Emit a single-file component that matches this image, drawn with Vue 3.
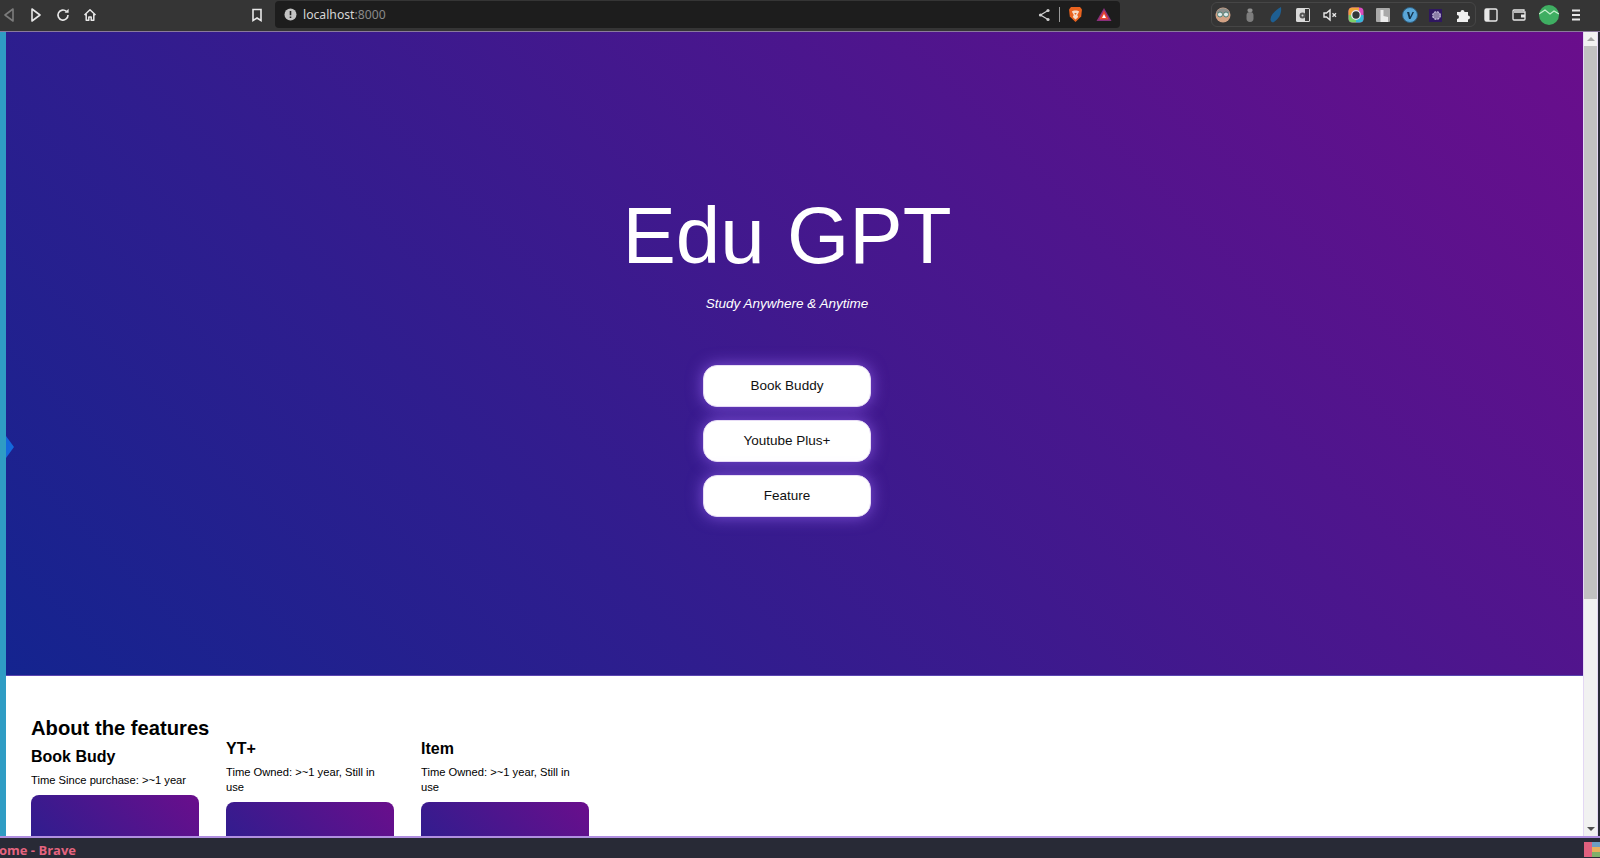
<script setup>
const features = [
  { title: 'Book Budy', text: 'Time Since purchase: >~1 year', about: true },
  { title: 'YT+', text: 'Time Owned: >~1 year, Still in use' },
  { title: 'Item', text: 'Time Owned: >~1 year, Still in use' },
];
const buttons = ['Book Buddy', 'Youtube Plus+', 'Feature'];
</script>

<template>
  <div class="window">
    <header class="toolbar">
      <div class="nav">
        <svg width="14" height="16" viewBox="0 0 14 16"><path d="M11 2 3 8l8 6z" fill="none" stroke="#7c7c7c" stroke-width="1.6" stroke-linejoin="round"/></svg>
        <svg width="14" height="16" viewBox="0 0 14 16"><path d="M3 2l8 6-8 6z" fill="none" stroke="#e8e8e8" stroke-width="1.6" stroke-linejoin="round"/></svg>
        <svg width="14" height="16" viewBox="0 0 14 16"><path d="M12 8a5 5 0 1 1-1.6-3.6" fill="none" stroke="#e8e8e8" stroke-width="1.6"/><path d="M12.6 1.8v4h-4z" fill="#e8e8e8"/></svg>
        <svg width="14" height="16" viewBox="0 0 14 16"><path d="M1.5 8 7 2.8 12.5 8M3.2 7v6.2h2.6V10h2.4v3.2h2.6V7" fill="none" stroke="#e8e8e8" stroke-width="1.5" stroke-linejoin="round"/></svg>
      </div>
      <svg class="bookmark" width="12" height="14" viewBox="0 0 12 14"><path d="M2 1.5h8v11L6 10l-4 2.5z" fill="none" stroke="#e8e8e8" stroke-width="1.6"/></svg>
      <div class="urlbar">
        <svg width="13" height="13" viewBox="0 0 13 13"><circle cx="6.5" cy="6.5" r="6" fill="#c4c4c4"/><path d="M6.5 3v4.2M6.5 8.6v1.4" stroke="#222" stroke-width="1.6"/></svg>
        <span class="url">localhost<span class="port">:8000</span></span>
        <svg class="share" width="12" height="14" viewBox="0 0 12 14"><path d="M10 2.5 2.5 7l7.5 4.5" fill="none" stroke="#d0d0d0" stroke-width="1.2"/><circle cx="10" cy="2.5" r="1.6" fill="#d0d0d0"/><circle cx="2.5" cy="7" r="1.6" fill="#d0d0d0"/><circle cx="10" cy="11.5" r="1.6" fill="#d0d0d0"/></svg>
        <span class="divider"></span>
        <svg width="15" height="17" viewBox="0 0 15 17"><path d="M3 1h9l2 2.500-.8 7L7.500 16 1.800 10.500 1 3.500z" fill="#e9631f"/><path d="M3.800 5.500 6 4.500h3l2.200 1-2 3.500 1 2-2.700 2.500L4.800 11l1-2z" fill="#f6dcc8"/><path d="M6.300 7h2.400l-1.200 2z" fill="#e9631f"/></svg>
        <svg width="16" height="15" viewBox="0 0 16 15"><path d="M8 1l7.500 13H.5z" fill="#8a2f7c"/><path d="M8 3.500l4.800 9H3.200z" fill="#e8452f"/><path d="M8 7l2 4H6z" fill="#fff"/></svg>
      </div>
      <div class="extensions">
        <svg width="16" height="16" viewBox="0 0 16 16"><circle cx="8" cy="8" r="7.500" fill="#d2a184"/><path d="M1 6a7.500 7.500 0 0 1 14 0z" fill="#8d8f8c"/><circle cx="5" cy="7.500" r="2.500" fill="#dfeaea" stroke="#4f7f76"/><circle cx="11" cy="7.500" r="2.500" fill="#dfeaea" stroke="#4f7f76"/></svg>
        <svg width="16" height="16" viewBox="0 0 16 16"><rect x="5.500" y="1.500" width="5" height="3.500" rx="1.500" fill="#8f8f8f"/><rect x="4.500" y="5" width="7" height="10" rx="3.400" fill="#7d7d7d"/></svg>
        <svg width="16" height="16" viewBox="0 0 16 16"><path d="M13 0c.8 6-1.500 12-8 15.500C2 15 1.500 11 5 6.500 7.500 3.500 10 1.500 13 0z" fill="#1e5f92"/></svg>
        <svg width="16" height="16" viewBox="0 0 16 16"><rect x="1" y="1" width="14" height="14" rx="1.500" fill="#d9d9d9"/><path d="M10 2h4v12h-4z" fill="#3a3a3a"/><circle cx="7.500" cy="8.500" r="3" fill="#565656"/><circle cx="7.500" cy="8.500" r="1" fill="#d9d9d9"/></svg>
        <svg width="16" height="16" viewBox="0 0 16 16"><path d="M2 6h2.500L8 3v10L4.500 10H2z" fill="none" stroke="#e8e8e8" stroke-width="1.400"/><path d="M10.500 6.200l3.500 3.600M14 6.200l-3.500 3.600" stroke="#e8e8e8" stroke-width="1.300"/></svg>
        <svg width="16" height="16" viewBox="0 0 16 16"><rect x=".5" y=".5" width="15" height="15" rx="4" fill="#d94cc0"/><path d="M.5 8V4.500a4 4 0 0 1 4-4H11v7.500z" fill="#f0a43a"/><path d="M8 8h7.500v3.500a4 4 0 0 1-4 4H8z" fill="#37b8d8"/><path d="M.5 8H8v7.500H4.500a4 4 0 0 1-4-4z" fill="#7bd06a"/><circle cx="8" cy="8" r="4.300" fill="#33363a" stroke="#e8e8f0" stroke-width="1.300"/></svg>
        <svg width="16" height="16" viewBox="0 0 16 16"><rect x="1" y="1" width="14" height="14" rx="1" fill="#a9a9a9"/><path d="M5.500 3h3v6l4.500 1v5H5.500z" fill="#ececec"/></svg>
        <svg width="16" height="16" viewBox="0 0 16 16"><circle cx="8" cy="8" r="7.500" fill="#5aa6d8" stroke="#2f5f80"/><path d="M5 5h2.200l1 4.800L10.500 5H12l-3.500 7H7z" fill="#14334a"/></svg>
        <svg width="16" height="16" viewBox="0 0 16 16"><rect x="1" y="2" width="13" height="13" fill="#2f1760"/><circle cx="8.500" cy="8.500" r="3.800" fill="#8c7fa8" stroke="#c9bfe0" stroke-width="1.200" stroke-dasharray="2 1"/></svg>
        <svg width="16" height="16" viewBox="0 0 16 16"><path d="M2 5h3.500a2 2 0 1 1 4 0H13v3.500a2 2 0 1 1 0 4V15H2v-3a2 2 0 1 0 0-4z" fill="#f0f0f0"/></svg>
      </div>
      <svg class="after-pill" width="16" height="16" viewBox="0 0 16 16"><rect x="2" y="2" width="12" height="12" rx="1.500" fill="none" stroke="#e8e8e8" stroke-width="1.400"/><rect x="2" y="2" width="4.500" height="12" fill="#e8e8e8"/></svg>
      <svg class="wallet" width="16" height="16" viewBox="0 0 16 16"><path d="M13 4V3H3a1 1 0 0 0-1 1v8a1 1 0 0 0 1 1h10a1 1 0 0 0 1-1V5H3" fill="none" stroke="#e8e8e8" stroke-width="1.300"/><rect x="10" y="7.500" width="4" height="3" fill="#e8e8e8"/></svg>
      <svg class="avatar" width="20" height="20" viewBox="0 0 20 20"><circle cx="10" cy="10" r="10" fill="#3fae62"/><path d="M0 9l6-4 5 4 4-3 5 3" fill="none" stroke="#c8f0cf" stroke-width="1.200"/></svg>
      <svg class="menu" width="12" height="14" viewBox="0 0 12 14"><path d="M2 2.500h8M2 7h8M2 11.500h8" stroke="#e8e8e8" stroke-width="1.800"/></svg>
    </header>

    <div class="viewport">
      <div class="strip"></div>
      <span class="strip-arrow"></span>
      <main class="page">
        <section class="hero">
          <h1>Edu GPT</h1>
          <p class="tagline">Study Anywhere &amp; Anytime</p>
          <div class="actions">
            <button v-for="label in buttons" :key="label">{{ label }}</button>
          </div>
        </section>
        <section class="about">
          <div v-for="item in features" :key="item.title" class="col" :class="{ first: item.about }">
            <h2 v-if="item.about">About the features</h2>
            <h3>{{ item.title }}</h3>
            <p>{{ item.text }}</p>
            <div class="thumb"></div>
          </div>
        </section>
      </main>
      <div class="scrollbar">
        <span class="arrow up"></span>
        <span class="thumb-bar"></span>
        <span class="arrow down"></span>
      </div>
    </div>

    <footer class="panel">
      <span class="panel-title">ome - Brave</span>
      <div class="panel-blocks">
        <span class="pink"></span>
        <div class="stack"><i class="b"></i><i class="y"></i><i class="g"></i></div>
      </div>
    </footer>
  </div>
</template>

<style>
html, body {
  margin: 0;
  overflow: hidden;
}
</style>

<style scoped>
.window {
  width: 1600px;
  height: 858px;
  display: flex;
  flex-direction: column;
  overflow: hidden;
  background: #282a36;
  font-family: "Liberation Sans", Arial, sans-serif;
}

.toolbar {
  height: 29px;
  padding-bottom: 2px;
  flex: none;
  display: flex;
  align-items: center;
  background: #353535;
  border-bottom: 1px solid #8a7a9c;
  box-sizing: content-box;
}

.toolbar > svg {
  flex: none;
}

.nav {
  display: flex;
  align-items: center;
  gap: 13px;
  padding-left: 2px;
}

.bookmark {
  margin-left: 154px;
}

.urlbar {
  width: 845px;
  height: 27px;
  margin-left: 12px;
  padding: 0 8px 0 9px;
  box-sizing: border-box;
  display: flex;
  align-items: center;
  background: #1d1d1d;
  border-radius: 4px;
}

.url {
  margin-left: 6px;
  font-family: "Noto Sans", sans-serif;
  font-size: 12.2px;
  color: #d6d6d6;
}

.port {
  color: #8a8a8a;
}

.share {
  margin-left: auto;
}

.divider {
  width: 1px;
  height: 15px;
  margin: 0 8px 0 9px;
  background: #9a9a9a;
}

.urlbar svg:last-child {
  margin-left: 13px;
}

.extensions {
  width: 265px;
  height: 25px;
  margin-left: 91px;
  padding: 0 4px 0 3px;
  box-sizing: border-box;
  display: flex;
  align-items: center;
  justify-content: space-between;
  border: 1px solid #464646;
  border-radius: 6px;
}

.after-pill {
  margin-left: 7px;
}

.wallet {
  margin-left: 12px;
}

.avatar {
  margin-left: 12px;
}

.menu {
  margin-left: 11px;
}

.viewport {
  flex: 1;
  min-height: 0;
  display: flex;
  position: relative;
  border-bottom: 2px solid #b08fe0;
}

.strip {
  width: 6px;
  flex: none;
  background: #2f9cc4;
}

.strip-arrow {
  position: absolute;
  left: 6px;
  top: 404px;
  border-top: 11px solid transparent;
  border-bottom: 11px solid transparent;
  border-left: 8px solid #1468dc;
}

.page {
  flex: 1;
  min-width: 0;
  overflow: hidden;
  background: #fff;
}

.hero {
  height: 644px;
  padding: 158px 15px 0 0;
  box-sizing: border-box;
  display: flex;
  flex-direction: column;
  align-items: center;
  background: linear-gradient(45deg, #14248f, #6a0e8c);
  border-bottom: 1px solid #5b45b0;
  color: #fff;
}

h1 {
  margin: 0;
  font-size: 80px;
  font-weight: 400;
  line-height: 92px;
}

.tagline {
  margin: 14px 0 0;
  font-size: 13.5px;
  font-style: italic;
  line-height: 16px;
}

.actions {
  margin-top: 53px;
  display: flex;
  flex-direction: column;
  gap: 13px;
}

button {
  width: 168px;
  height: 42px;
  padding: 0 0 2px;
  border: 1px solid #e7dcf6;
  border-radius: 14px;
  background: #fff;
  color: #111;
  font-family: inherit;
  font-size: 13.5px;
  box-shadow: 0 0 16px rgba(150, 100, 240, 0.75);
}

.about {
  display: flex;
  gap: 27px;
  padding-left: 25px;
  color: #000;
}

.col {
  width: 168px;
  padding-top: 63px;
}

.col.first {
  padding-top: 40px;
}

h2 {
  margin: 0 -60px 0 0;
  font-size: 20.2px;
  line-height: 24px;
  white-space: nowrap;
}

h3 {
  margin: 0;
  font-size: 16px;
  line-height: 19px;
}

.first h3 {
  margin-top: 7px;
}

p {
  margin: 7px 0;
  font-size: 11.2px;
  line-height: 15px;
}

.thumb {
  height: 140px;
  border-radius: 8px;
  background: linear-gradient(45deg, #14248f, #6a0e8c);
}

.scrollbar {
  width: 13px;
  flex: none;
  margin-right: 2px;
  display: flex;
  flex-direction: column;
  align-items: center;
  background: #f1f1f1;
  border: solid #e4d8f4;
  border-width: 0 1px;
  box-sizing: content-box;
}

.arrow {
  width: 0;
  height: 0;
  border-left: 4px solid transparent;
  border-right: 4px solid transparent;
}

.arrow.up {
  margin-top: 5px;
  border-bottom: 4px solid #a3a3a3;
}

.arrow.down {
  margin: auto 0 5px;
  border-top: 4px solid #505050;
}

.thumb-bar {
  width: 100%;
  height: 553px;
  margin-top: 5px;
  background: #c1c1c1;
}

.panel {
  height: 20px;
  flex: none;
  display: flex;
  align-items: flex-end;
  justify-content: space-between;
  background: #282a36;
}

.panel-title {
  margin-left: -1px;
  font-family: "Open Sans", sans-serif;
  font-size: 13px;
  font-weight: 700;
  line-height: 16px;
  color: #e5647f;
}

.panel-blocks {
  display: flex;
  height: 15px;
  margin-bottom: 1px;
}

.pink {
  width: 8px;
  background: #e0607e;
}

.stack {
  width: 8px;
  display: flex;
  flex-direction: column;
}

.stack i {
  flex: 1;
}

.b { background: #6d9ec2; }
.y { background: #e8ae5c; }
.g { background: #7fb06a; }
</style>
